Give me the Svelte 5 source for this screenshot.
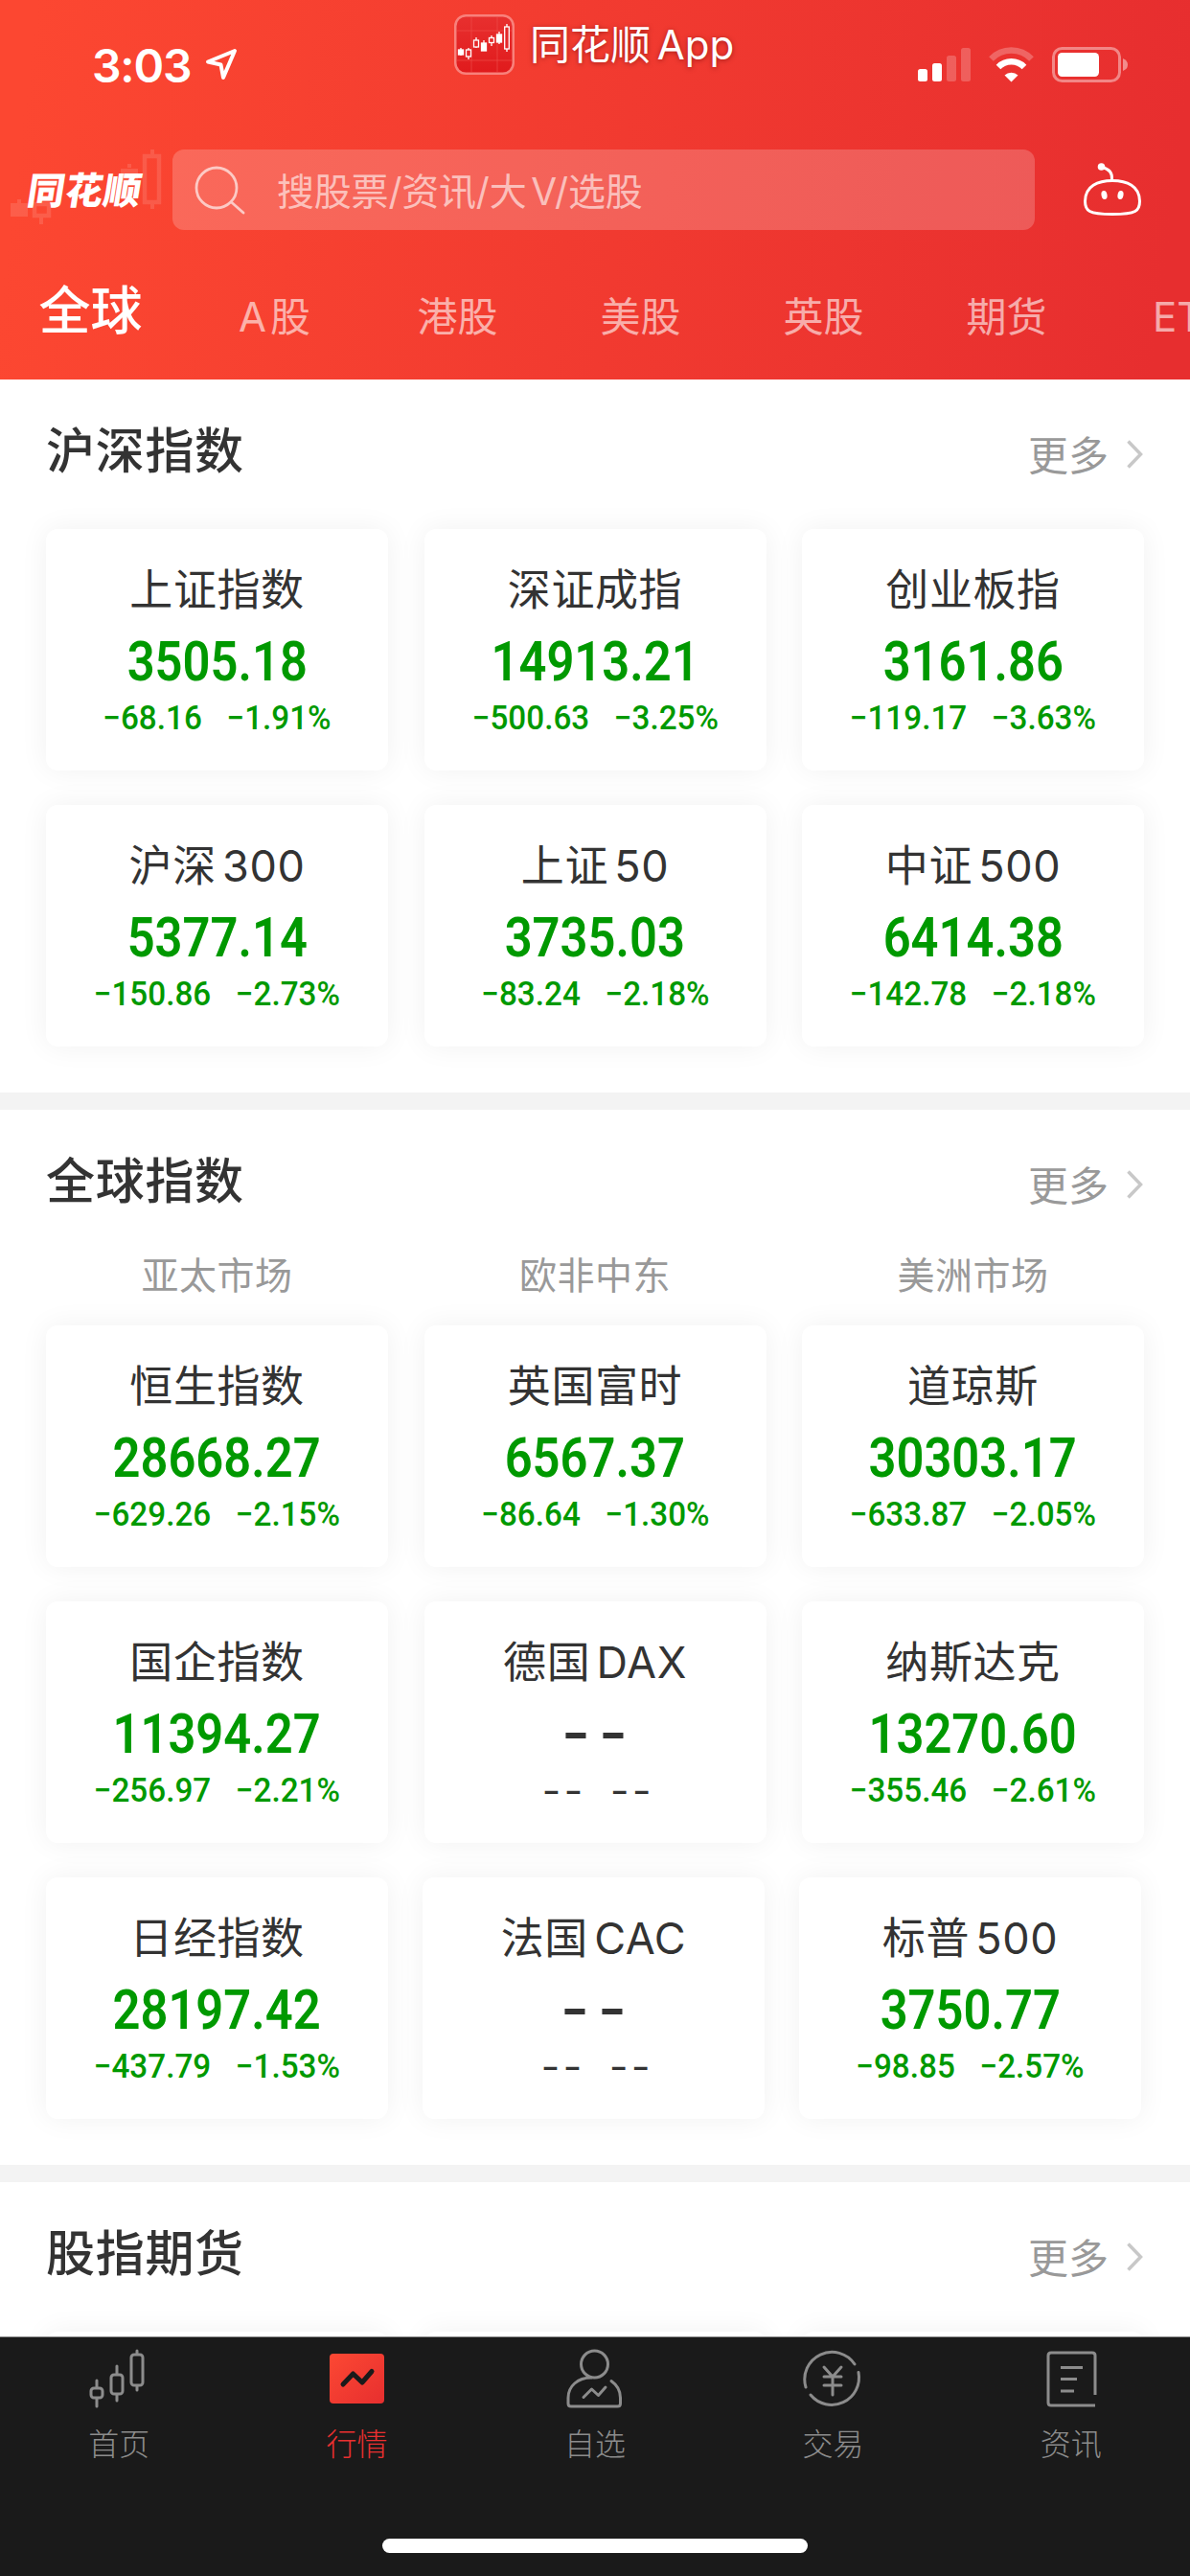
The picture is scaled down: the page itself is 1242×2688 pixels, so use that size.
<script lang="ts">
  type Quote = { name: string; price: string; change?: string; percent?: string };

  const tabs = ["A 股", "港股", "美股", "英股", "期货", "ETF"];

  const domestic: Quote[][] = [
    [
      { name: "上证指数", price: "3505.18", change: "−68.16", percent: "−1.91%" },
      { name: "深证成指", price: "14913.21", change: "−500.63", percent: "−3.25%" },
      { name: "创业板指", price: "3161.86", change: "−119.17", percent: "−3.63%" },
    ],
    [
      { name: "沪深 300", price: "5377.14", change: "−150.86", percent: "−2.73%" },
      { name: "上证 50", price: "3735.03", change: "−83.24", percent: "−2.18%" },
      { name: "中证 500", price: "6414.38", change: "−142.78", percent: "−2.18%" },
    ],
  ];

  const world: Quote[][] = [
    [
      { name: "恒生指数", price: "28668.27", change: "−629.26", percent: "−2.15%" },
      { name: "英国富时", price: "6567.37", change: "−86.64", percent: "−1.30%" },
      { name: "道琼斯", price: "30303.17", change: "−633.87", percent: "−2.05%" },
    ],
    [
      { name: "国企指数", price: "11394.27", change: "−256.97", percent: "−2.21%" },
      { name: "德国 DAX", price: "--" },
      { name: "纳斯达克", price: "13270.60", change: "−355.46", percent: "−2.61%" },
    ],
    [
      { name: "日经指数", price: "28197.42", change: "−437.79", percent: "−1.53%" },
      { name: "法国 CAC", price: "--" },
      { name: "标普 500", price: "3750.77", change: "−98.85", percent: "−2.57%" },
    ],
  ];

  const sections = [
    { title: "沪深指数", regions: [] as string[], rows: domestic },
    { title: "全球指数", regions: ["亚太市场", "欧非中东", "美洲市场"], rows: world },
    { title: "股指期货", regions: [] as string[], rows: [] as Quote[][] },
  ];

  const nav = [
    { id: "home", label: "首页" },
    { id: "market", label: "行情" },
    { id: "watch", label: "自选" },
    { id: "trade", label: "交易" },
    { id: "news", label: "资讯" },
  ];
  let active = $state("market");
</script>

<div class="screen">
  <header>
    <div class="status">
      <div class="clock">
        <span>3:03</span>
        <svg width="34" height="34" viewBox="0 0 34 34">
          <path d="M31 3 L3 14.5 L16.5 17.5 L19 31 Z" fill="none" stroke="#fff" stroke-width="4" stroke-linejoin="round" />
        </svg>
      </div>
      <div class="app-tag">
        <svg width="63" height="63" viewBox="0 0 63 63">
          <defs>
            <linearGradient id="tag" x1="0" y1="0" x2="0" y2="1">
              <stop offset="0" stop-color="#e8302f" />
              <stop offset="1" stop-color="#e01a1c" />
            </linearGradient>
          </defs>
          <rect x="1.25" y="1.25" width="60.5" height="60.5" rx="11" fill="url(#tag)" stroke="#f8817b" stroke-width="2.5" />
          <path d="M18 3V60M45 3V60M3 17H60M3 48H60" stroke="#ee4a47" stroke-width="0.7" />
          <g stroke="#fff" stroke-width="1.3">
            <path d="M7 35V43M15 35V47M23 24V35M31 27V38M39 22V33M47 18V31M55 10V39" />
            <g fill="#e5282a">
              <rect x="12.5" y="37" width="5" height="7" />
              <rect x="20.5" y="27" width="5" height="7" />
              <rect x="36.5" y="24.5" width="5" height="5" />
              <rect x="52.7" y="13" width="4.6" height="23" />
            </g>
            <g fill="#fff">
              <rect x="4.5" y="37" width="5" height="5" />
              <rect x="28.5" y="30" width="5" height="8" />
              <rect x="44.5" y="21" width="5" height="8" />
            </g>
          </g>
        </svg>
        <span>同花顺 App</span>
      </div>
      <svg class="signals" width="220" height="38" viewBox="0 0 220 38" fill="#fff">
        <rect x="0" y="23" width="10" height="13" rx="2.5" />
        <rect x="15" y="17" width="10" height="19" rx="2.5" />
        <rect x="30" y="9" width="10" height="27" rx="2.5" opacity=".22" />
        <rect x="45" y="1" width="10" height="35" rx="2.5" opacity=".22" />
        <g fill="none" stroke="#fff" stroke-width="6.5">
          <path d="M76.5 12.5a29 29 0 0 1 42 0" opacity=".25" />
          <path d="M84 21a19 19 0 0 1 27 0" />
        </g>
        <path d="M90.5 29.5a10 10 0 0 1 14 0L97.500 36.500Z" />
        <rect x="141.5" y="1.5" width="69" height="34" rx="9" fill="none" stroke="#fff" stroke-width="3" opacity=".42" />
        <rect x="146" y="6" width="43" height="25" rx="4.5" />
        <path d="M214 12q5 2 5 6.500t-5 6.500Z" opacity=".45" />
      </svg>
    </div>

    <div class="search-row">
      <div class="brand">
        <svg width="180" height="80" viewBox="0 0 180 80" fill="none" stroke="#fff" opacity=".12">
          <path d="M20 50v5M43 69v7M135 13v4M159 -2v6M159 55v5" stroke-width="4" />
          <path d="M11 54h18v14H11zM126 18h18v14h-18z" fill="#fff" stroke="none" />
          <path d="M36 55h15v12H36zM151 5h15v48h-15z" stroke-width="4.5" />
        </svg>
        <b>同花顺</b>
      </div>
      <div class="search">
        <svg width="56" height="56" viewBox="0 0 56 56" fill="none" stroke="#fff" stroke-width="2.8" stroke-linecap="round">
          <circle cx="24" cy="26" r="21" />
          <path d="M39.500 41L52 52" />
        </svg>
        <span>搜股票/资讯/大 V/选股</span>
      </div>
      <svg class="robot" width="62" height="58" viewBox="0 0 62 58" fill="none" stroke="#fff" stroke-width="3" stroke-linecap="round">
        <path d="M20 5.5C27 7 31 11 30.5 18" />
        <path d="M31 19.5C46 19.5 59.5 25 59.5 41C59.5 51 56 54.5 31 54.5C6 54.5 2.5 51 2.5 41C2.5 25 16 19.5 31 19.5Z" />
        <g fill="#fff" stroke="none">
          <circle cx="19.5" cy="5" r="3.8" />
          <ellipse cx="22.5" cy="34.5" rx="3" ry="4.5" transform="rotate(-10 22.5 34.5)" />
          <ellipse cx="39.5" cy="34.5" rx="3" ry="4.5" transform="rotate(10 39.5 34.5)" />
        </g>
      </svg>
    </div>

    <nav class="tabs">
      <span class="current">全球</span>
      {#each tabs as tab (tab)}
        <span>{tab}</span>
      {/each}
    </nav>
  </header>

  <main>
    {#each sections as section (section.title)}
      <section>
        <div class="heading" class:compact={section.regions.length > 0}>
          <h2>{section.title}</h2>
          <div class="more">
            <span>更多</span>
            <svg width="18" height="32" viewBox="0 0 18 32">
              <path d="M2.5 2.5L15.500 16L2.500 29.500" fill="none" stroke="#c8c8c8" stroke-width="3.500" />
            </svg>
          </div>
        </div>
        {#if section.regions.length}
          <div class="regions">
            {#each section.regions as region (region)}
              <span>{region}</span>
            {/each}
          </div>
        {/if}
        <div class="rows">
          {#each section.rows as row, i (i)}
            <div class="row" class:tight={i === 2}>
              {#each row as quote (quote.name)}
                <article>
                  <div class="name">{quote.name}</div>
                  {#if quote.change}
                    <div class="price">{quote.price}</div>
                    <div class="delta">
                      <span>{quote.change}</span>
                      <span>{quote.percent}</span>
                    </div>
                  {:else}
                    <div class="price empty">--</div>
                    <div class="delta empty">
                      <span>--</span>
                      <span>--</span>
                    </div>
                  {/if}
                </article>
              {/each}
            </div>
          {:else}
            <div class="row">
              <article></article>
              <article></article>
              <article></article>
            </div>
          {/each}
        </div>
      </section>
    {/each}
  </main>

  <footer>
    <div class="nav">
      {#each nav as item (item.id)}
        <button class:active={active === item.id} onclick={() => (active = item.id)}>
          <svg width="64" height="64" viewBox="0 0 64 64" fill="none" stroke="currentColor" stroke-width="3">
            {#if item.id === "home"}
              <g stroke-linecap="round">
                <rect x="3" y="42" width="12" height="10" rx="3" />
                <rect x="24" y="28" width="12" height="20" rx="3" />
                <rect x="45" y="7" width="12" height="32" rx="3" />
                <path d="M9 34v7M9 53v8M30 19v8M30 49v6M51 3v3M51 40v4" />
              </g>
            {:else if item.id === "market"}
              <defs>
                <linearGradient id="market" x1="0" y1="0" x2="1" y2="1">
                  <stop offset="0" stop-color="#fc4833" />
                  <stop offset="1" stop-color="#e72f2f" />
                </linearGradient>
              </defs>
              <rect x="3" y="6" width="57" height="52" rx="4" fill="url(#market)" stroke="none" />
              <path d="M17 38L27.5 27L37 36L47 24.5" stroke="#1a1a1a" stroke-width="5" stroke-linecap="round" stroke-linejoin="round" />
            {:else if item.id === "watch"}
              <g stroke-linecap="round" stroke-linejoin="round">
                <circle cx="31.500" cy="17" r="14" />
                <path d="M28 31C14 31 4 40 4 52V58Q4 61 7 61H55.500Q58.500 61 58.500 58V52C58.500 44 54 38 49 34.500" />
                <path d="M20 51.500L28.500 43L35.500 49.500L43 41" />
              </g>
            {:else if item.id === "trade"}
              <g stroke-linecap="round">
                <path d="M55 17A28.5 28.5 0 0 0 4 41" />
                <path d="M59 25.5A28.5 28.5 0 0 1 9 49" />
                <path d="M23 20L32 30L41 20M23 30H41M23 39H41M32 30V49" />
              </g>
            {:else}
              <path d="M57 49V8Q57 5 54 5H11Q8 5 8 8V57Q8 60 11 60H57" />
              <path d="M21 20.5H44M21 32.500H38M21 45H35" />
            {/if}
          </svg>
          <span>{item.label}</span>
        </button>
      {/each}
    </div>
    <div class="home-indicator"></div>
  </footer>
</div>

<style>
  :global(body) {
    margin: 0;
    background: #fff;
  }
  .screen {
    display: flex;
    flex-direction: column;
    width: 1242px;
    height: 2688px;
    overflow: hidden;
    background: #fff;
    color: #333;
    font-family: Inter, "Noto Sans CJK SC", sans-serif;
  }
  header {
    flex: none;
    height: 396px;
    overflow: hidden;
    color: #fff;
    background: linear-gradient(97deg, #fc4731 3%, #e72e2f 97%);
  }
  .status {
    display: grid;
    grid-template-columns: 474px 1fr 284px;
    height: 156px;
    align-items: start;
  }
  .clock {
    display: flex;
    gap: 15px;
    padding: 39px 0 0 96px;
    font-size: 48px;
    font-weight: 600;
    line-height: 60px;
    letter-spacing: -1.2px;
  }
  .clock svg {
    margin-top: 11px;
  }
  .app-tag {
    display: flex;
    align-items: center;
    gap: 16px;
    padding-top: 15px;
    font-size: 42px;
    line-height: 63px;
    text-shadow: 0 1px 5px rgba(90, 0, 0, 0.5);
    word-spacing: -5px;
  }
  .signals {
    margin-top: 49px;
  }
  .search-row {
    display: flex;
    align-items: center;
    height: 84px;
  }
  .brand {
    display: grid;
    width: 180px;
    align-items: center;
  }
  .brand > * {
    grid-area: 1 / 1;
  }
  .brand svg {
    overflow: visible;
  }
  .brand b {
    padding: 0 0 5px 29px;
    font-size: 39px;
    font-weight: 900;
    letter-spacing: 0.8px;
    transform: skewX(-9deg);
  }
  .search {
    display: flex;
    align-items: center;
    gap: 31px;
    box-sizing: border-box;
    width: 900px;
    height: 84px;
    padding-left: 22px;
    border-radius: 12px;
    background: rgba(255, 255, 255, 0.2);
    font-size: 39px;
    color: rgba(255, 255, 255, 0.6);
    word-spacing: -6px;
    letter-spacing: -0.2px;
  }
  .search span {
    padding-bottom: 3px;
  }
  .search svg {
    opacity: 0.65;
  }
  .robot {
    margin-left: 50px;
  }
  .tabs {
    display: flex;
    height: 156px;
    line-height: 182px;
    font-size: 42px;
    color: rgba(255, 255, 255, 0.6);
  }
  .tabs span {
    flex: none;
    width: 191px;
    text-align: center;
    word-spacing: -8px;
    white-space: nowrap;
  }
  .tabs .current {
    width: 189px;
    margin-right: 2px;
    font-size: 54px;
    line-height: 170px;
    font-weight: 500;
    color: #fff;
  }
  main {
    height: 2042px;
    overflow: hidden;
  }
  section {
    padding: 0 48px 48px;
    border-bottom: 18px solid #f3f3f3;
  }
  .heading {
    display: flex;
    justify-content: space-between;
    height: 156px;
  }
  .heading.compact {
    height: 141px;
  }
  h2 {
    margin: 0;
    font-size: 51px;
    line-height: 149px;
    font-weight: 500;
    letter-spacing: 0.7px;
  }
  .more {
    display: flex;
    align-items: center;
    gap: 18px;
    height: 156px;
    padding-right: 1px;
    font-size: 42px;
    color: #999;
  }
  .more span {
    padding-bottom: 4px;
  }
  .regions {
    display: grid;
    grid-template-columns: repeat(3, 1fr);
    column-gap: 37.5px;
    height: 84px;
    line-height: 63px;
    text-align: center;
    font-size: 39px;
    letter-spacing: 0.5px;
    color: #999;
  }
  .rows {
    display: grid;
    gap: 36px;
  }
  .row {
    display: grid;
    grid-template-columns: repeat(3, 357px);
    column-gap: 37.5px;
  }
  .row.tight {
    column-gap: 36px;
  }
  article {
    display: flex;
    flex-direction: column;
    align-items: center;
    height: 252px;
    border-radius: 12px;
    background: #fff;
    box-shadow: 0 0 30px rgba(0, 0, 0, 0.06);
    white-space: nowrap;
  }
  .name {
    margin-top: 31px;
    height: 66px;
    line-height: 66px;
    font-size: 45px;
    letter-spacing: 0.6px;
    word-spacing: -7px;
  }
  .price {
    height: 76px;
    line-height: 83px;
    font-family: Roboto, sans-serif;
    font-size: 57px;
    font-weight: 600;
    color: #090;
    transform: scaleX(0.89);
  }
  .delta {
    display: flex;
    gap: 27px;
    line-height: 50px;
    font-family: Roboto, sans-serif;
    font-size: 35px;
    font-weight: 500;
    color: #090;
    transform: scaleX(0.95);
  }
  .empty {
    font-family: Inter, sans-serif;
    color: #333;
  }
  .price.empty {
    letter-spacing: 8px;
    padding-left: 8px;
    line-height: 79px;
    transform: scaleX(1.13);
  }
  .delta.empty {
    gap: 21px;
    padding-left: 6px;
    line-height: 48px;
    letter-spacing: 3px;
    transform: scaleX(1.2);
  }
  footer {
    display: flex;
    flex-direction: column;
    align-items: center;
    flex: none;
    box-sizing: border-box;
    height: 250px;
    border-top: 1px solid #888;
    background: #1a1a1a;
  }
  .nav {
    display: flex;
    width: 100%;
    height: 210px;
  }
  button {
    display: flex;
    flex-direction: column;
    align-items: center;
    flex: 1;
    gap: 13px;
    padding: 11px 0 0;
    border: none;
    background: none;
    font: 300 32px/48px Inter, "Noto Sans CJK SC", sans-serif;
    color: #8c8c8c;
  }
  button.active {
    color: #e93030;
  }
  .home-indicator {
    width: 444px;
    height: 15px;
    border-radius: 8px;
    background: #fff;
  }
</style>
